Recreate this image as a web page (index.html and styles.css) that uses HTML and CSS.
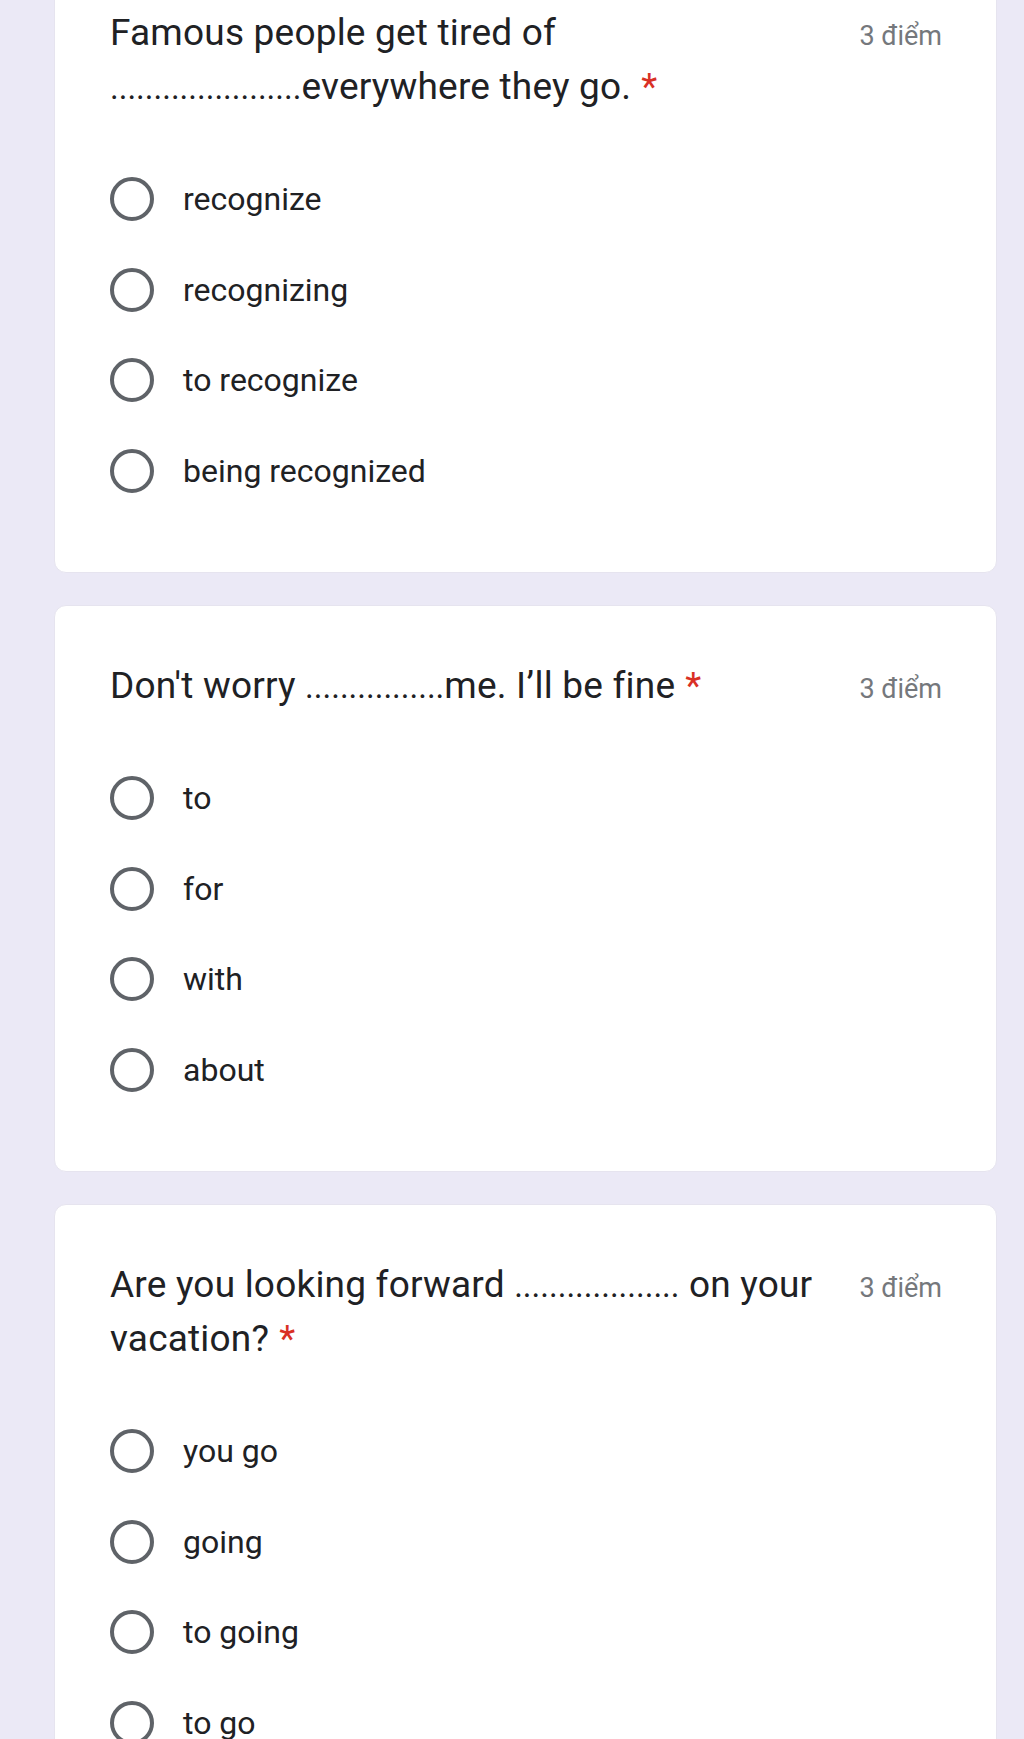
FILE: index.html
```html
<!DOCTYPE html>
<html lang="vi">
<head>
<meta charset="utf-8">
<title>Form</title>
<link rel="stylesheet" href="styles.css">
</head>
<body>
<main class="form">
  <section class="card card-first">
    <div class="q-head">
      <div class="q-title">Famous people get tired of <span class="dots">......................</span>everywhere they go.<span class="req">*</span></div>
      <div class="q-points">3 điểm</div>
    </div>
    <div class="options">
      <label class="option"><span class="radio"></span><span class="opt-text">recognize</span></label>
      <label class="option"><span class="radio"></span><span class="opt-text">recognizing</span></label>
      <label class="option"><span class="radio"></span><span class="opt-text">to recognize</span></label>
      <label class="option"><span class="radio"></span><span class="opt-text">being recognized</span></label>
    </div>
  </section>

  <section class="card">
    <div class="q-head">
      <div class="q-title">Don't worry <span class="dots">................</span>me. I’ll be fine<span class="req">*</span></div>
      <div class="q-points">3 điểm</div>
    </div>
    <div class="options">
      <label class="option"><span class="radio"></span><span class="opt-text">to</span></label>
      <label class="option"><span class="radio"></span><span class="opt-text">for</span></label>
      <label class="option"><span class="radio"></span><span class="opt-text">with</span></label>
      <label class="option"><span class="radio"></span><span class="opt-text">about</span></label>
    </div>
  </section>

  <section class="card">
    <div class="q-head">
      <div class="q-title">Are you looking forward <span class="dots">...................</span> on your vacation?<span class="req">*</span></div>
      <div class="q-points">3 điểm</div>
    </div>
    <div class="options">
      <label class="option"><span class="radio"></span><span class="opt-text">you go</span></label>
      <label class="option"><span class="radio"></span><span class="opt-text">going</span></label>
      <label class="option"><span class="radio"></span><span class="opt-text">to going</span></label>
      <label class="option"><span class="radio"></span><span class="opt-text">to go</span></label>
    </div>
  </section>
</main>
</body>
</html>
```

FILE: styles.css
```css
* { box-sizing: border-box; }

html, body {
  margin: 0;
  padding: 0;
  background: #ebe9f6;
}

body {
  font-family: Roboto, "Liberation Sans", Arial, sans-serif;
  color: #202124;
  height: 1739px;
  overflow: hidden;
}

.form {
  display: flex;
  flex-direction: column;
  gap: 32px;
  padding: 0 27px 0 54px;
  margin-top: -48px;
}

.card {
  background: #ffffff;
  border-radius: 12px;
  border: 1px solid #e6e4ef;
  padding: 53px 54px 56px 55px;
}

.q-head {
  display: flex;
  align-items: baseline;
  gap: 30px;
}

.q-title {
  flex: 1;
  font-size: 37px;
  line-height: 54px;
  color: #202124;
  letter-spacing: 0.2px;
}

.dots {
  font-size: 33px;
  line-height: 1;
  letter-spacing: 0;
}

.req {
  color: #d93025;
  margin-left: 10px;
}

.q-points {
  font-size: 27px;
  color: #75787c;
  white-space: nowrap;
}

.options {
  display: flex;
  flex-direction: column;
  margin-top: 40px;
}

.option {
  display: flex;
  align-items: center;
  height: 90.5px;
  gap: 29px;
}

.radio {
  width: 44px;
  height: 44px;
  border-radius: 50%;
  border: 4px solid #5f6368;
  flex: none;
}

.opt-text {
  font-size: 32px;
  color: #202124;
}
```
